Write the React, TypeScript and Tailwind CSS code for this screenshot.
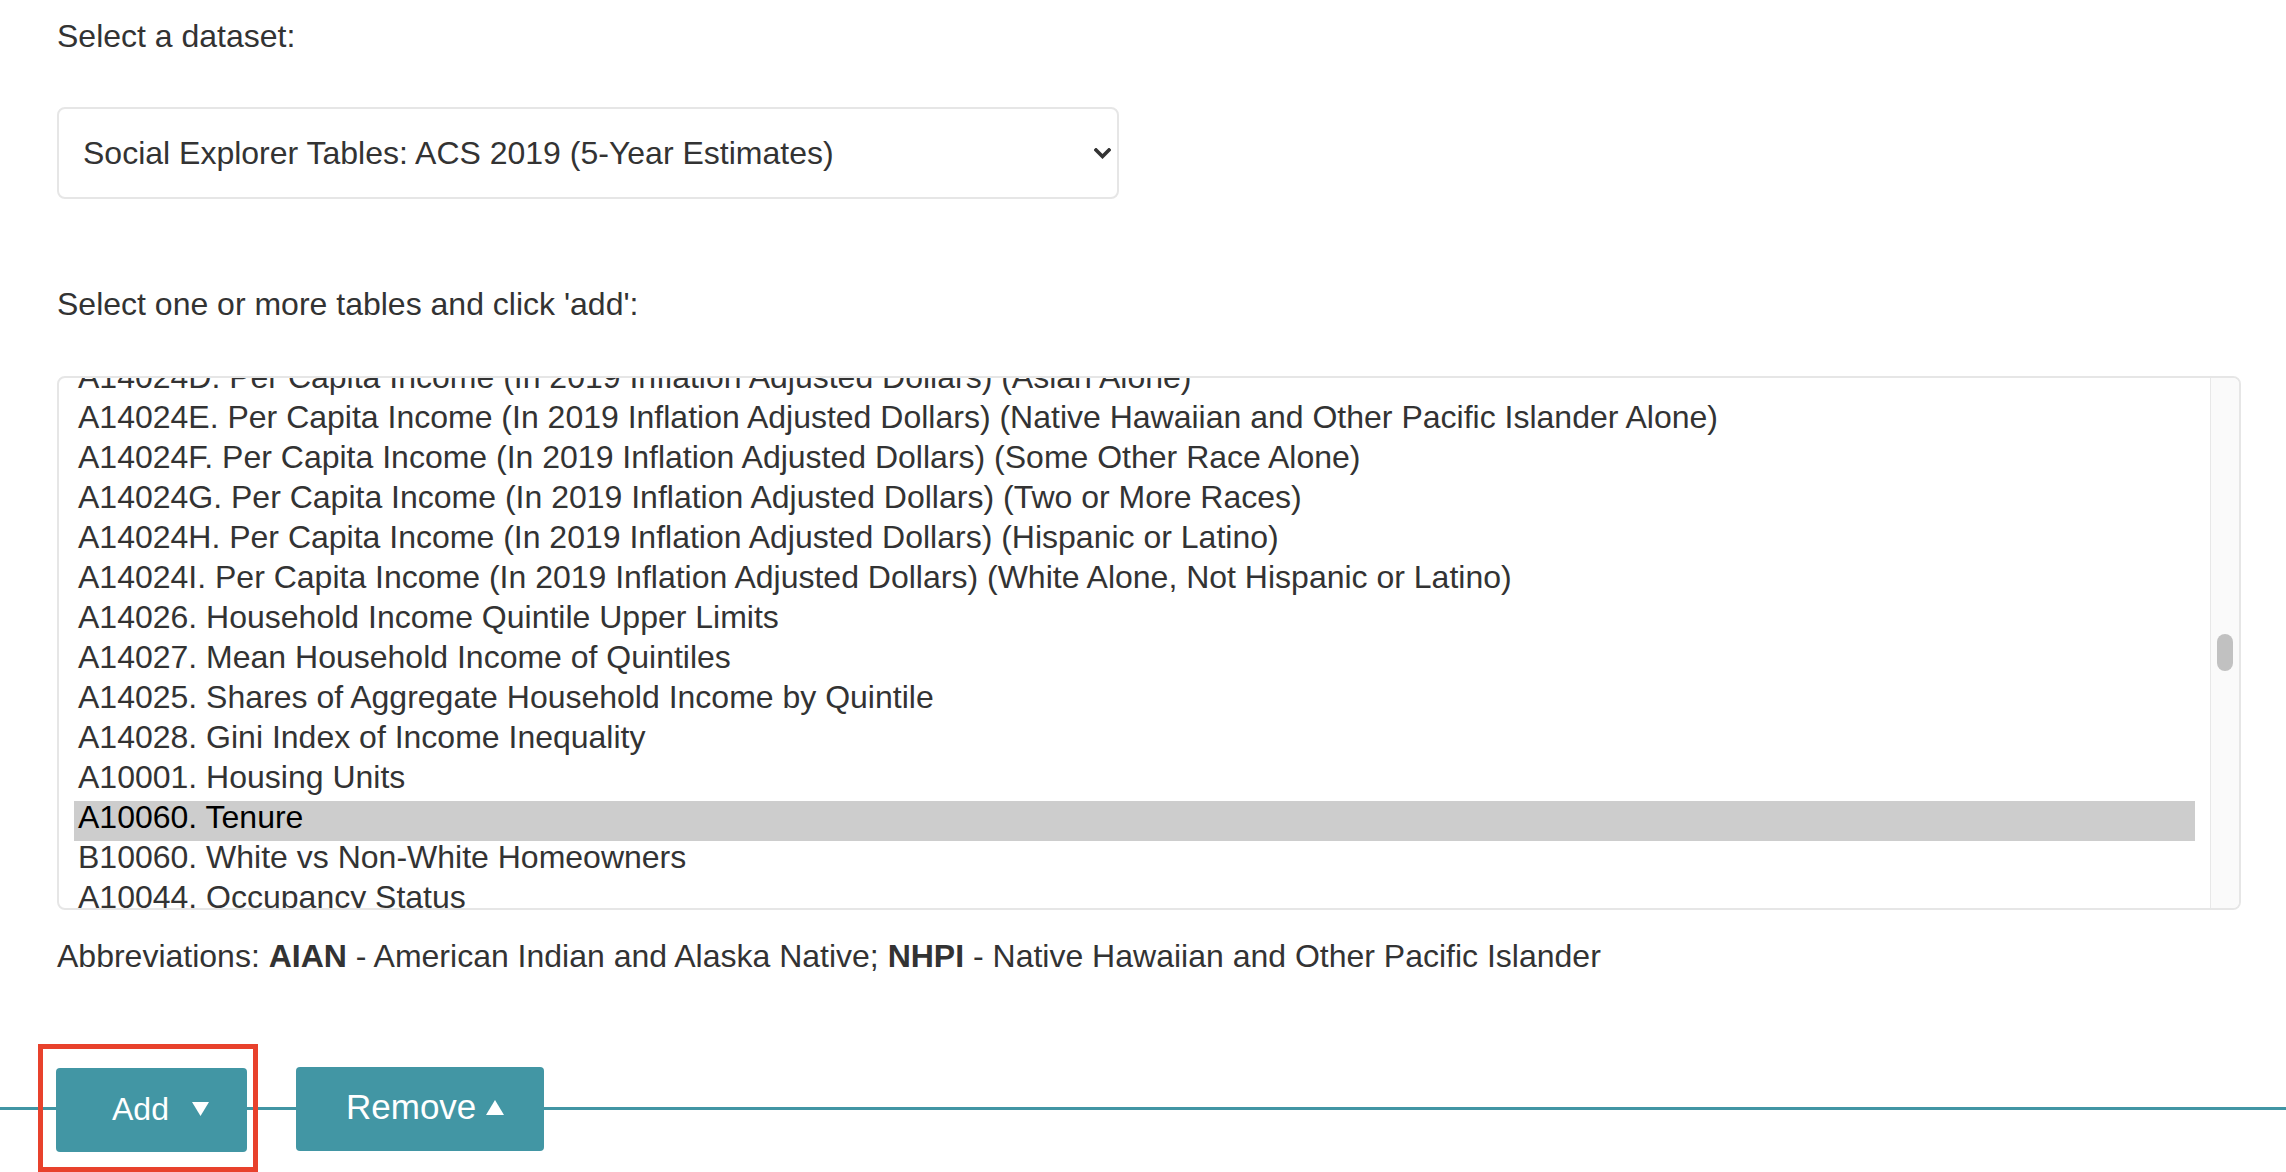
import React from "react";

const tables = [
  "A14024D. Per Capita Income (In 2019 Inflation Adjusted Dollars) (Asian Alone)",
  "A14024E. Per Capita Income (In 2019 Inflation Adjusted Dollars) (Native Hawaiian and Other Pacific Islander Alone)",
  "A14024F. Per Capita Income (In 2019 Inflation Adjusted Dollars) (Some Other Race Alone)",
  "A14024G. Per Capita Income (In 2019 Inflation Adjusted Dollars) (Two or More Races)",
  "A14024H. Per Capita Income (In 2019 Inflation Adjusted Dollars) (Hispanic or Latino)",
  "A14024I. Per Capita Income (In 2019 Inflation Adjusted Dollars) (White Alone, Not Hispanic or Latino)",
  "A14026. Household Income Quintile Upper Limits",
  "A14027. Mean Household Income of Quintiles",
  "A14025. Shares of Aggregate Household Income by Quintile",
  "A14028. Gini Index of Income Inequality",
  "A10001. Housing Units",
  "A10060. Tenure",
  "B10060. White vs Non-White Homeowners",
  "A10044. Occupancy Status",
];

const selected = "A10060. Tenure";

export default function App() {
  return (
    <div className="min-h-screen bg-white font-['Liberation_Sans',Arial,sans-serif] text-[#333]">
      <div className="pl-[57px] pr-[45px] pt-[16px]">
        <p className="text-[32px] leading-[40px]">Select a dataset:</p>

        {/* dataset dropdown */}
        <div className="mt-[51px] flex h-[92px] w-[1062px] items-center justify-between rounded-[8px] border-2 border-[#e6e6e6] pl-[24px] pr-[6px]">
          <span className="text-[32px] leading-[40px]">Social Explorer Tables: ACS 2019 (5-Year Estimates)</span>
          <svg width="17" height="11" viewBox="0 0 17 11" aria-hidden>
            <polyline points="2,2 8.5,8.5 15,2" fill="none" stroke="#333" strokeWidth="3.6" strokeLinecap="square" />
          </svg>
        </div>

        <p className="mt-[85px] text-[32px] leading-[40px]">Select one or more tables and click 'add':</p>

        {/* table list */}
        <div className="mt-[52px] flex h-[534px] overflow-hidden rounded-[8px] border-2 border-[#e6e6e6]">
          <div className="flex-1 overflow-hidden px-[15px]">
            <ul className="-mt-[17px]">
              {tables.map((t) => (
                <li
                  key={t}
                  className={
                    t === selected
                      ? "h-[40px] whitespace-nowrap bg-[#cdcdcd] pl-[4px] text-[32px] leading-[33px] text-black"
                      : "h-[40px] whitespace-nowrap pl-[4px] text-[32px] leading-[33px]"
                  }
                >
                  {t}
                </li>
              ))}
            </ul>
          </div>
          <div className="flex w-[29px] justify-center border-l border-[#e8e8e8] bg-[#fafafa]">
            <div className="mt-[256px] h-[37px] w-[16px] rounded-full bg-[#c1c1c1]" />
          </div>
        </div>

        <p className="mt-[26px] text-[32px] leading-[40px]">
          Abbreviations: <b>AIAN</b> - American Indian and Alaska Native; <b>NHPI</b> - Native Hawaiian and Other Pacific
          Islander
        </p>
      </div>

      {/* action bar */}
      <div className="mt-[89px] flex items-center">
        <div className="h-[3px] w-[56px] bg-[#4195a4]" />
        <div className="relative">
          <button
            type="button"
            className="mt-[3px] flex h-[84px] w-[191px] items-center gap-[23px] rounded-[4px] bg-[#4296a4] pb-[3px] pl-[56px] text-[32px] text-white"
          >
            Add
            <svg width="17" height="15" viewBox="0 0 17 15" aria-hidden>
              <polygon points="0,1 17,1 8.5,15" fill="white" />
            </svg>
          </button>
          <span className="pointer-events-none absolute -bottom-[20px] -left-[18px] -right-[11px] -top-[21px] border-[5px] border-[#e8412c]" />
        </div>
        <div className="h-[3px] w-[49px] bg-[#4195a4]" />
        <button
          type="button"
          className="flex h-[84px] w-[248px] items-center gap-[10px] rounded-[4px] bg-[#4296a4] pb-[2px] pl-[50px] text-[35px] text-white"
        >
          Remove
          <svg width="18" height="16" viewBox="0 0 18 16" aria-hidden>
            <polygon points="9,0 18,15 0,15" fill="white" />
          </svg>
        </button>
        <div className="h-[3px] flex-1 bg-[#4195a4]" />
      </div>
    </div>
  );
}
